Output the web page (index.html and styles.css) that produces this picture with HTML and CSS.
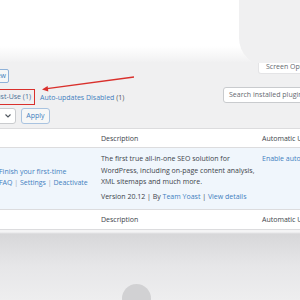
FILE: index.html
```html
<!DOCTYPE html>
<html lang="en">
<head>
<meta charset="UTF-8">
<title>Plugins</title>
<link rel="stylesheet" href="styles.css">
</head>
<body>
<div class="screen">
  <div class="hero"><div class="blob"></div></div>

  <div class="toolbar">
    <div class="lead lead-add"><span class="btn">Add New</span></div>
    <span class="tab">Screen Options</span>
  </div>

  <div class="filters">
    <div class="lead lead-views"><span class="mark">Must-Use (1)</span></div>
    <span class="view"><a>Auto-updates Disabled</a> (1)</span>
    <div class="search">Search installed plugins...</div>
  </div>

  <div class="bulk">
    <div class="lead lead-bulk">
      <span class="select">Bulk actions
        <svg width="6" height="4" viewBox="0 0 6 4"><polyline points="0.5,0.5 3,3 5.5,0.5" fill="none" stroke="#50575e" stroke-width="1.1"/></svg>
      </span>
    </div>
    <span class="apply">Apply</span>
  </div>

  <div class="table">
    <div class="thead">
      <div class="cell"></div>
      <div class="cell">Description</div>
      <div class="cell">Automatic Updates</div>
    </div>
    <div class="trow">
      <div class="cell plugin">
        <div class="line">Finish your first-time</div>
        <div class="line"><a>FAQ</a> | <a>Settings</a> | <a>Deactivate</a></div>
      </div>
      <div class="cell desc">
        <p>The first true all-in-one SEO solution for<br>WordPress, including on-page content analysis,<br>XML sitemaps and much more.</p>
        <div class="meta">Version 20.12 | By <a>Team Yoast</a> | <a>View details</a></div>
      </div>
      <div class="cell auto"><a>Enable auto-updates</a></div>
    </div>
    <div class="tfoot">
      <div class="cell"></div>
      <div class="cell">Description</div>
      <div class="cell">Automatic Updates</div>
    </div>
  </div>

  <div class="shade"><div class="dot"></div></div>

  <svg class="arrow" width="300" height="300" viewBox="0 0 300 300">
    <line x1="134" y1="77" x2="47" y2="88.6" stroke="#d9302c" stroke-width="1.4"/>
    <polygon points="42,89.4 48.3,91.5 47.6,86.1" fill="#d9302c"/>
  </svg>
</div>
</body>
</html>
```

FILE: styles.css
```css
* {
  box-sizing: border-box;
}
body {
  margin: 0;
  width: 300px;
  height: 300px;
  overflow: hidden;
  font-family: "Open Sans", "Noto Sans", sans-serif;
  font-size: 7px;
  color: #50575e;
  background: #f0f0f1;
}
a {
  color: #3f7fc0;
}
.screen {
  position: relative;
  height: 300px;
}
.hero {
  position: relative;
  height: 62px;
  overflow: hidden;
  background: linear-gradient(#ffffff 0, #ffffff 46px, #f1f1f2 62px);
}
.blob {
  position: absolute;
  left: 239px;
  top: -20px;
  width: 90px;
  height: 86px;
  border-bottom-left-radius: 28px;
  background: #f0f0f1;
}

/* lead boxes end at a fixed x and let their content overflow to the left */
.lead {
  display: flex;
  justify-content: flex-end;
  flex-shrink: 0;
}
.lead > * {
  flex-shrink: 0;
  white-space: nowrap;
}

.toolbar {
  display: flex;
  justify-content: space-between;
  align-items: flex-start;
  height: 22px;
}
.lead-add {
  width: 9px;
  margin-top: 7px;
}
.btn {
  height: 14px;
  padding: 0 2px 0 3px;
  line-height: 12px;
  color: #3f7fc0;
  background: #f6f7f7;
  border: 1px solid #8fb2d9;
  border-radius: 2px;
}
.tab {
  width: 60px;
  height: 11px;
  margin-top: 1px;
  margin-right: -18px;
  padding-left: 7px;
  line-height: 8px;
  white-space: nowrap;
  color: #646970;
  background: #fff;
  border: 1px solid #e4e4e6;
  border-top: none;
  border-radius: 0 0 3px 3px;
}

.filters {
  display: flex;
  align-items: flex-start;
  height: 22px;
}
.lead-views {
  width: 35px;
  margin-top: 5px;
}
.mark {
  height: 16px;
  padding: 0 3px 0 6px;
  line-height: 13px;
  color: #4a6f95;
  border: 1.5px solid #d9302c;
}
.view {
  margin: 9px 0 0 5px;
  line-height: 9px;
  white-space: nowrap;
}
.search {
  width: 90px;
  height: 16px;
  margin: 3px -13px 0 auto;
  padding-left: 5px;
  line-height: 14px;
  white-space: nowrap;
  color: #646970;
  background: #fff;
  border: 1px solid #c9cbce;
  border-radius: 3px;
}

.bulk {
  display: flex;
  gap: 5px;
  height: 22px;
  padding-top: 2px;
}
.lead-bulk {
  width: 16px;
}
.select {
  display: flex;
  align-items: center;
  gap: 6px;
  height: 16px;
  padding: 0 4px 0 5px;
  background: #fff;
  border: 1px solid #c9cbce;
  border-radius: 3px;
}
.apply {
  width: 29px;
  height: 16px;
  line-height: 14px;
  text-align: center;
  color: #3f7fc0;
  background: #f6f7f7;
  border: 1px solid #a9c3e0;
  border-radius: 3px;
}

.table {
  width: 360px;
  background: #fff;
  border-top: 1px solid #dcdcde;
}
.thead,
.trow,
.tfoot {
  display: grid;
  grid-template-columns: 96px 161px 1fr;
  border-bottom: 1px solid #dcdcde;
}
.thead,
.tfoot {
  height: 19px;
  align-items: center;
  color: #3c434a;
}
.thead {
  padding-top: 1px;
}
.tfoot {
  height: 20px;
}
.cell {
  padding: 0 5px;
  white-space: nowrap;
}
.trow {
  height: 62px;
  background: #f0f6fc;
}
.plugin {
  padding: 18px 0 0 0;
  margin-left: -1px;
  line-height: 11px;
  color: #3f7fc0;
}
.plugin .line {
  color: #9aa7b4;
}
.plugin .line:first-child {
  color: #3f7fc0;
}
.desc {
  padding-top: 5px;
  line-height: 11.5px;
  color: #3c434a;
}
.desc p {
  margin: 0 0 3px;
}
.meta {
  line-height: 11.5px;
}
.auto {
  padding-top: 5px;
  line-height: 11px;
}

.shade {
  position: relative;
  height: 70px;
  background: linear-gradient(#f4f4f5 0, #f4f4f5 2px, #d7d7d9 4px, #e6e6e8 35px, #eeeeef 70px);
}
.dot {
  position: absolute;
  left: 122px;
  top: 54px;
  width: 29px;
  height: 29px;
  border-radius: 50%;
  background: #d1d1d3;
}
.arrow {
  position: absolute;
  left: 0;
  top: 0;
  pointer-events: none;
}
```
